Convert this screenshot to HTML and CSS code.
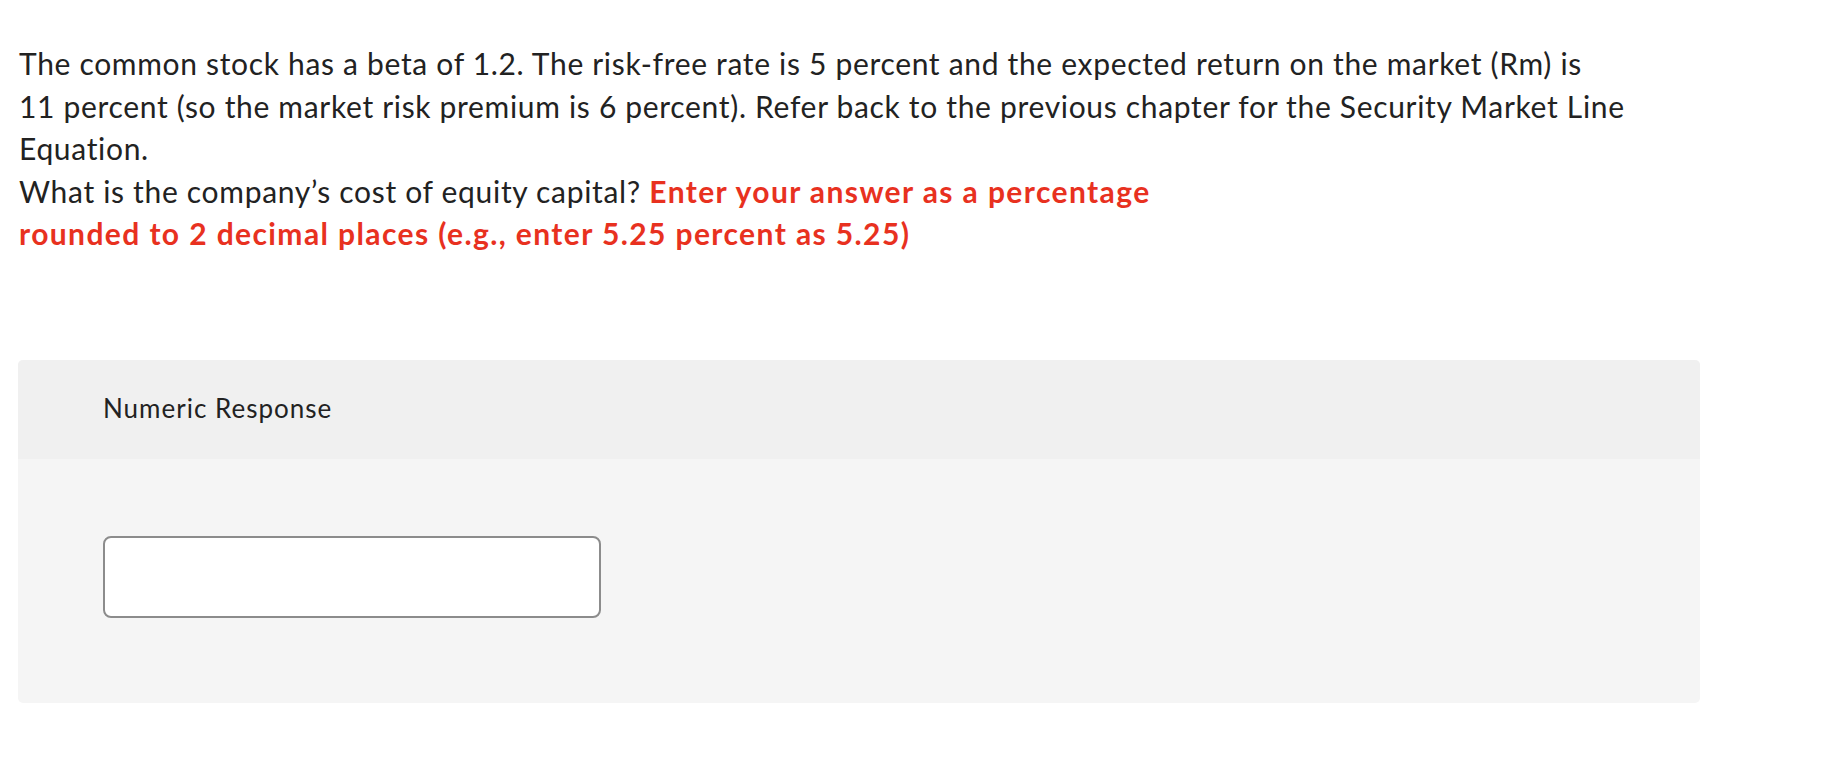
FILE: index.html
```html
<!DOCTYPE html>
<html lang="en">
<head>
<meta charset="utf-8">
<title>Question</title>
<link rel="stylesheet" href="styles.css">
</head>
<body>
<main class="page">
  <p class="prompt">The common stock has a beta of 1.2. The risk-free rate is 5 percent and the expected return on the market (Rm) is<br>11 percent (so the market risk premium is 6 percent). Refer back to the previous chapter for the Security Market Line<br>Equation.<br>What is the company’s cost of equity capital? <strong class="hint">Enter your answer as a percentage<br>rounded to 2 decimal places (e.g., enter 5.25 percent as 5.25)</strong></p>

  <section class="card">
    <div class="card-head">
      <span class="card-title">Numeric Response</span>
    </div>
    <div class="card-body">
      <input class="answer" type="text" aria-label="Numeric Response">
    </div>
  </section>
</main>
</body>
</html>
```

FILE: styles.css
```css
html, body {
  margin: 0;
  padding: 0;
  background: #ffffff;
}

.page {
  padding: 42px 144px 0 18px;
  font-family: Lato, "Open Sans", sans-serif;
  color: #222222;
}

.prompt {
  margin: 0 0 105.5px 1px;
  font-size: 30px;
  line-height: 42.5px;
  letter-spacing: 0.68px;
  white-space: nowrap;
}

.hint {
  color: #e8311f;
  font-weight: 700;
  letter-spacing: 1.4px;
}

.card {
  width: 1682px;
  border-radius: 5px;
  overflow: hidden;
  background: #f5f5f5;
}

.card-head {
  height: 99px;
  box-sizing: border-box;
  background: #f0f0f0;
  padding-left: 85px;
  padding-bottom: 4px;
  display: flex;
  align-items: center;
}

.card-title {
  font-size: 26px;
  letter-spacing: 1px;
  color: #222222;
}

.card-body {
  height: 244px;
  padding-left: 85px;
  padding-top: 77px;
  box-sizing: border-box;
}

.answer {
  display: block;
  width: 498px;
  height: 82px;
  box-sizing: border-box;
  border: 2px solid #8c8c8c;
  border-radius: 8px;
  background: #ffffff;
  margin: 0;
  outline: none;
}
```
